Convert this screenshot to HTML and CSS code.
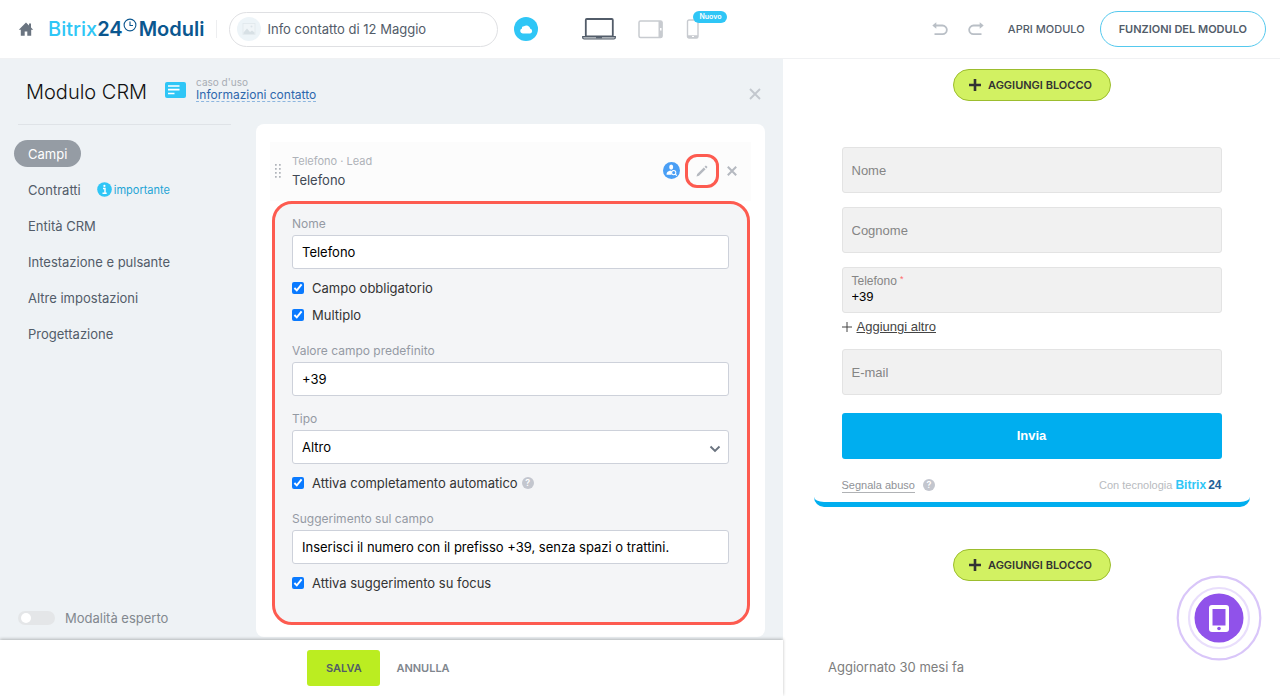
FILE: index.html
```html
<!DOCTYPE html>
<html lang="it">
<head>
<meta charset="utf-8">
<meta name="viewport" content="width=device-width, initial-scale=1">
<title>Bitrix24 Moduli</title>
<link rel="stylesheet" href="styles.css">
</head>
<body>
<div class="app">
  <header class="topbar">
    <a class="home" href="#" aria-label="Home">
      <svg width="16" height="16" viewBox="0 0 16 16"><path d="M8 1.500.8 8.700h2v6.100h3.900v-4.300h2.600v4.300h3.900V8.700h2L13 6.500V2.500h-2v2z" fill="#6a7480"/></svg>
    </a>
    <a class="brand" href="#"><span class="brand-light">Bitrix</span><span>24</span><svg class="brand-clock" width="14" height="14" viewBox="0 0 14 14" fill="none" stroke="#0b578f"><circle cx="7" cy="7" r="5.900" stroke-width="1.100"/><path d="M7 3.500V7.500h3" stroke-width="1.100"/></svg><span class="brand-name">Moduli</span></a>
    <span class="divider"></span>
    <div class="title-pill">
      <span class="thumb"><svg width="14" height="14" viewBox="0 0 14 14"><rect x="1" y="1.500" width="12" height="11" fill="#f0f5f8" stroke="#e0e8ec" stroke-width=".8"/><circle cx="9.500" cy="4.500" r="1" fill="#dbe4e9"/><path d="m1.500 10.500 3.500-4 3 3.500 2-1.500 2.500 2v1.500h-11z" fill="#d7e0e5"/></svg></span>
      <span>Info contatto di 12 Maggio</span>
    </div>
    <button class="icon-btn cloud" aria-label="Salvato">
      <svg width="24" height="24" viewBox="0 0 24 24"><circle cx="12" cy="12" r="12" fill="#2fc6f6"/><path d="M8.700 16.500a2.500 2.500 0 0 1-.7-4.900 2 2 0 0 1 2-2.300 4 4 0 0 1 6.300 2.500 2.400 2.400 0 0 1-.2 4.700z" fill="#fff"/></svg>
    </button>
    <div class="devices">
      <button class="icon-btn" aria-label="Desktop"><svg width="34" height="22" viewBox="0 0 34 22" fill="none" stroke="#525c69"><rect x="3.800" y="1" width="27" height="17.500" rx="1" stroke-width="1.800"/><path d="M.7 18.600h32.600v1.200q0 1.200-1.500 1.200H2.200Q.7 21 .7 19.800z" fill="#c9ccd1" stroke-width="1.200"/><path d="M14 19.700h6" stroke-width="1.200"/></svg></button>
      <button class="icon-btn" aria-label="Tablet"><svg width="26" height="19" viewBox="0 0 26 19"><rect x="1" y="1" width="23" height="16.500" rx="1.500" fill="#fff" stroke="#c8cbd0" stroke-width="1.500"/><path d="M20.500 1H23q1.500 0 1.500 1.500V16q0 1.500-1.500 1.500h-2.500z" fill="#c8cbd0"/><rect x="22" y="8" width="1.500" height="2.500" fill="#fff"/></svg></button>
      <button class="icon-btn phone" aria-label="Telefono"><svg width="14" height="20" viewBox="0 0 14 20"><rect x="1.500" y="1" width="10.500" height="18" rx="1.500" fill="#fff" stroke="#c8cbd0" stroke-width="1.400"/><path d="M1.500 16.200H12v1.600q0 1.200-1.200 1.200H2.700q-1.200 0-1.200-1.200z" fill="#c8cbd0"/><path d="M6 17.500h2" stroke="#fff"/></svg><span class="new-tag">Nuovo</span></button>
    </div>
    <div class="actions">
      <button class="icon-btn" aria-label="Annulla azione"><svg width="16" height="14" viewBox="0 0 16 14"><path d="M3 3.500h7.500a4.300 4.300 0 0 1 0 8.700H2.500" fill="none" stroke="#b9bfc6" stroke-width="1.800"/><path d="M.3 3.500 4.300.2v6.600z" fill="#b9bfc6"/></svg></button>
      <button class="icon-btn" aria-label="Ripeti azione"><svg width="16" height="14" viewBox="0 0 16 14"><path d="M13 3.500H5.500a4.300 4.300 0 0 0 0 8.700h8" fill="none" stroke="#b9bfc6" stroke-width="1.800"/><path d="m15.700 3.500-4-3.300v6.600z" fill="#b9bfc6"/></svg></button>
      <a class="open-form" href="#">APRI MODULO</a>
      <button class="features">FUNZIONI DEL MODULO</button>
    </div>
  </header>

  <main class="workspace">
    <section class="editor">
      <div class="editor-head">
        <h1>Modulo CRM</h1>
        <svg class="case-icon" width="21" height="16" viewBox="0 0 21 16"><rect width="21" height="16" rx="2" fill="#2fc6f6"/><path d="M3 4h11.500M3 7.600h11.500M3 11.500h6.500" stroke="#fff" stroke-width="1.700"/></svg>
        <div class="case"><span>caso d'uso</span><a href="#">Informazioni contatto</a></div>
        <button class="icon-btn close" aria-label="Chiudi"><svg width="12" height="12" viewBox="0 0 12 12"><path d="m1 1 10 10M11 1 1 11" stroke="#c3c8ce" stroke-width="1.900"/></svg></button>
      </div>
      <div class="editor-body">
        <aside class="side">
          <nav class="menu">
            <a class="active" href="#">Campi</a>
            <a href="#">Contratti <span class="important"><svg width="15" height="15" viewBox="0 0 15 15"><circle cx="7.500" cy="7.500" r="7.300" fill="#2fc6f6"/><path d="M6 6.500h2v4.700M5.500 11.200h4.200" stroke="#fff" stroke-width="1.400" fill="none"/><circle cx="7.400" cy="3.900" r="1.100" fill="#fff"/></svg>importante</span></a>
            <a href="#">Entità CRM</a>
            <a href="#">Intestazione e pulsante</a>
            <a href="#">Altre impostazioni</a>
            <a href="#">Progettazione</a>
          </nav>
          <label class="expert"><input type="checkbox"><span>Modalità esperto</span></label>
        </aside>
        <div class="card">
          <div class="field-head">
            <svg class="grip" width="7" height="14" viewBox="0 0 7 14" fill="#b0b4ba"><path d="M0 0h1.700v1.700H0zM4 0h1.700v1.700H4zM0 4h1.700v1.700H0zM4 4h1.700v1.700H4zM0 8h1.700v1.700H0zM4 8h1.700v1.700H4zM0 12h1.700v1.700H0zM4 12h1.700v1.700H4z"/></svg>
            <div class="field-title"><span>Telefono · Lead</span><strong>Telefono</strong></div>
            <svg width="17" height="17" viewBox="0 0 17 17"><circle cx="8.500" cy="8.500" r="8.500" fill="#4a9ff5"/><ellipse cx="8.200" cy="5.100" rx="2" ry="2.600" fill="#fff"/><path d="M3.500 12.800c0-2.800 1-3.600 3.700-4.400l2 1-.8 3.400z" fill="#fff"/><circle cx="10.700" cy="10.600" r="2.100" fill="#4a9ff5" stroke="#fff" stroke-width="1.100"/><path d="m12.300 12.200 1.500 1.500" stroke="#fff" stroke-width="1.200"/></svg>
            <button class="icon-btn edit" aria-label="Modifica"><svg width="12" height="12" viewBox="0 0 12 12"><path d="M.5 11.500 1.200 9 7.800 2.400l1.800 1.800L3 10.800zM8.500 1.700l.8-.8q.6-.6 1.200 0l.6.6q.6.600 0 1.200l-.8.800z" fill="#b5b9c0"/></svg></button>
            <button class="icon-btn" aria-label="Rimuovi"><svg width="10" height="10" viewBox="0 0 10 10"><path d="m.8.8 8.400 8.400M9.200.8.8 9.200" stroke="#b5b9c0" stroke-width="2"/></svg></button>
          </div>
          <form class="settings">
            <div class="group">
              <label class="caption" for="name">Nome</label>
              <input class="box" id="name" type="text" value="Telefono">
              <label class="check"><input type="checkbox" checked>Campo obbligatorio</label>
              <label class="check"><input type="checkbox" checked>Multiplo</label>
            </div>
            <div class="group near">
              <label class="caption" for="default">Valore campo predefinito</label>
              <input class="box" id="default" type="text" value="+39">
            </div>
            <div class="group">
              <label class="caption" for="type">Tipo</label>
              <div class="select-wrap">
                <select class="box" id="type"><option>Altro</option></select>
                <svg class="chevron" width="12" height="8" viewBox="0 0 12 8"><path d="m1.500 1.500 4.500 4.500 4.500-4.500" fill="none" stroke="#6a737f" stroke-width="1.900"/></svg>
              </div>
              <label class="check"><input type="checkbox" checked>Attiva completamento automatico<span class="help">?</span></label>
            </div>
            <div class="group">
              <label class="caption" for="hint">Suggerimento sul campo</label>
              <input class="box" id="hint" type="text" value="Inserisci il numero con il prefisso +39, senza spazi o trattini.">
              <label class="check"><input type="checkbox" checked>Attiva suggerimento su focus</label>
            </div>
          </form>
        </div>
      </div>
      <footer class="savebar">
        <button class="save">SALVA</button>
        <button class="cancel">ANNULLA</button>
      </footer>
    </section>

    <section class="preview">
      <button class="add-block"><svg width="12" height="12" viewBox="0 0 12 12"><path d="M6 0v12M0 6h12" stroke="#333" stroke-width="2.600"/></svg>AGGIUNGI BLOCCO</button>
      <form class="crm-form">
        <input class="crm-input" type="text" placeholder="Nome" aria-label="Nome">
        <input class="crm-input" type="text" placeholder="Cognome" aria-label="Cognome">
        <div class="crm-phone">
          <label for="phone">Telefono <sup>*</sup></label>
          <input id="phone" type="tel" value="+39">
        </div>
        <a class="add-more" href="#"><svg width="10" height="10" viewBox="0 0 10 10"><path d="M5 0v10M0 5h10" stroke="#444"/></svg><span>Aggiungi altro</span></a>
        <input class="crm-input" type="email" placeholder="E-mail" aria-label="E-mail">
        <button class="submit" type="button">Invia</button>
        <div class="crm-foot">
          <a href="#">Segnala abuso</a><span class="help">?</span>
          <span class="powered">Con tecnologia <b>Bitrix</b><b class="dark">24</b></span>
        </div>
      </form>
      <button class="add-block"><svg width="12" height="12" viewBox="0 0 12 12"><path d="M6 0v12M0 6h12" stroke="#333" stroke-width="2.600"/></svg>AGGIUNGI BLOCCO</button>
      <p class="updated">Aggiornato 30 mesi fa</p>
      <button class="icon-btn widget" aria-label="Chiamata">
        <svg width="86" height="86" viewBox="0 0 86 86" fill="none"><circle cx="43" cy="43" r="41.300" stroke="#d9c6f9" stroke-width="2.200"/><circle cx="43" cy="43" r="30" stroke="#e9defc" stroke-width="2.200"/><circle cx="43" cy="43" r="24.500" fill="#9052ea"/><rect x="33" y="30" width="20" height="27" rx="3" fill="#fff"/><path d="M36.500 34h13v16.500h-13z" fill="#9052ea"/><circle cx="43" cy="53.500" r="1.800" fill="#9052ea"/></svg>
      </button>
    </section>
  </main>
</div>
</body>
</html>
```
FILE: styles.css
```css
* { box-sizing: border-box; }
body { margin: 0; font-family: Inter, "Liberation Sans", sans-serif; font-size: 13px; line-height: 16px; color: #525c69; background: #fff; }
button, input, select { font: inherit; color: inherit; margin: 0; }
button { cursor: pointer; }
a { color: inherit; text-decoration: none; }
svg { display: block; flex: none; }
.app { min-height: 100vh; display: flex; flex-direction: column; }
.icon-btn { display: flex; align-items: center; justify-content: center; border: 0; padding: 0; background: none; flex: none; }

.topbar { display: flex; align-items: center; height: 59px; padding: 0 14px 0 18px; border-bottom: 1px solid #f0f1f3; }
.brand { display: flex; align-items: center; margin-left: 14px; font-size: 20px; line-height: 24px; font-weight: 600; color: #0b578f; }
.brand-light { color: #2fc6f6; font-weight: 500; }
.brand-clock { align-self: flex-start; margin-top: 1px; }
.brand-name { margin-left: 2px; }
.divider { width: 1px; height: 18px; margin: 0 12px; background: #edeef0; }
.title-pill { display: flex; align-items: center; gap: 6px; width: 269px; height: 35px; padding: 0 7px; border: 1px solid #dfe0e3; border-radius: 18px; white-space: nowrap; }
.thumb { display: flex; align-items: center; justify-content: center; width: 24px; height: 24px; border-radius: 50%; background: #edf4f8; }
.cloud { margin-left: 16px; }
.devices { display: flex; align-items: center; gap: 22px; margin-left: 44px; }
.phone { position: relative; }
.new-tag { position: absolute; left: 7px; top: -8px; padding: 0 6px; border-radius: 6px; background: #2fc6f6; color: #fff; font-size: 7px; line-height: 12px; font-weight: 600; }
.actions { display: flex; align-items: center; gap: 20px; margin-left: auto; font-size: 11px; }
.open-form { margin-left: 4px; font-weight: 500; }
.features { height: 36px; margin-left: -5px; padding: 0 18px; border: 1px solid #55c9ee; border-radius: 18px; background: #fff; font-weight: 600; white-space: nowrap; }

.workspace { flex: 1; display: grid; grid-template-columns: minmax(0, 783fr) minmax(0, 497fr); }
.editor { display: flex; flex-direction: column; background: #eef2f5; }
.editor-head { display: flex; align-items: center; height: 65px; padding: 0 22px 0 26px; }
.editor-head h1 { margin: 0; font-size: 20px; line-height: 28px; font-weight: 300; color: #111; }
.case-icon { margin: 0 10px 4px 18px; }
.case { display: flex; flex-direction: column; align-items: flex-start; margin-bottom: 6px; }
.case span { font-size: 10px; line-height: 12px; color: #a8adb4; }
.case a { font-size: 12px; line-height: 13px; color: #2d67ad; border-bottom: 1px dashed #8db6df; }
.close { margin: 4px 0 0 auto; }
.editor-body { flex: 1; display: flex; padding-right: 18px; }
.side { display: flex; flex-direction: column; justify-content: space-between; width: 256px; flex: none; padding-bottom: 14px; }
.menu { display: flex; flex-direction: column; align-items: flex-start; gap: 9px; margin: 0 25px 0 18px; padding-top: 15px; border-top: 1px solid #dfe3e7; }
.menu a { display: flex; align-items: center; height: 27px; margin-left: -4px; padding: 0 14px; border-radius: 14px; }
.menu .active { background: #959ca4; color: #fff; }
.important { display: flex; align-items: center; gap: 2px; margin-left: 16px; font-size: 11px; color: #1ea5d6; }
.expert { display: flex; align-items: center; gap: 10px; margin-left: 18px; color: #82888f; }
.expert input { appearance: none; display: flex; align-items: center; width: 37px; height: 14px; border-radius: 7px; background: #e4e6e8; padding-left: 3px; }
.expert input::before { content: ""; width: 10px; height: 10px; border-radius: 50%; background: #fff; }

.card { flex: 1; min-width: 0; margin-bottom: 3px; padding: 18px 14px 12px; border-radius: 8px; background: #fff; }
.field-head { display: flex; align-items: center; height: 59px; padding: 0 14px 2px 5px; background: #fcfcfc; }
.grip { margin-right: 10px; }
.field-title { display: flex; flex-direction: column; gap: 3px; flex: 1; }
.field-title span { font-size: 11px; color: #aeb2b8; }
.field-title strong { font-weight: 400; color: #414955; }
.edit { width: 34px; height: 34px; margin: 0 8px 0 5px; border: 3px solid #fd5b50; border-radius: 12px; }
.settings { display: flex; flex-direction: column; gap: 20px; margin: 0 1px 0 2px; padding: 12px 18px 31px 17px; border: 3px solid #fd5b50; border-radius: 20px; background: #f4f5f7; }
.group { display: flex; flex-direction: column; }
.near { margin-bottom: -5px; }
.caption { margin-bottom: 3px; font-size: 12px; color: #949aa4; }
.box { width: 100%; height: 34px; padding: 0 9px; border: 1px solid #cdd1da; border-radius: 3px; background: #fff; color: #000; font-size: 13px; }
.check { display: flex; align-items: center; margin-top: 11px; color: #333; }
.check input { width: 12px; height: 12px; margin-right: 8px; accent-color: #0a7aff; }
.select-wrap { position: relative; }
.select-wrap select { appearance: none; display: block; }
.chevron { position: absolute; right: 8px; top: 15px; pointer-events: none; }
.help { display: flex; align-items: center; justify-content: center; width: 12px; height: 12px; margin-left: 4px; border-radius: 50%; background: #c3c6ce; color: #fff; font-size: 9px; line-height: 12px; font-weight: 600; }

.savebar { position: relative; z-index: 1; display: flex; align-items: center; justify-content: center; gap: 16px; height: 56px; padding-right: 26px; background: #fff; box-shadow: 0 -1px 3px rgba(0, 0, 0, .25); font-size: 11px; font-weight: 600; }
.save { width: 73px; height: 36px; padding: 0; border: 0; border-radius: 3px; background: #bbed21; color: #525c69; }
.cancel { padding: 0; border: 0; background: none; color: #80868e; }

.preview { position: relative; display: flex; flex-direction: column; align-items: center; padding-top: 10px; background: #fff; }
.add-block { display: flex; align-items: center; justify-content: center; gap: 7px; width: 158px; height: 32px; padding: 0 2px 0 0; border: 1px solid #9cbd2e; border-radius: 16px; background: #d2f162; color: #333; font-size: 11px; font-weight: 600; white-space: nowrap; }
.crm-form { display: flex; flex-direction: column; width: calc(100% - 61px); margin: 30px 0 42px; padding: 16px 28px 8px; border-bottom: 5px solid #00aeef; border-radius: 10px; font-family: "Liberation Sans", Arial, sans-serif; }
.crm-input, .crm-phone { width: 100%; height: 46px; margin-bottom: 14px; padding: 0 9px; border: 1px solid #e3e3e3; border-radius: 3px; background: #f1f1f1; }
.crm-input::placeholder { color: #858585; opacity: 1; }
.crm-phone { display: flex; flex-direction: column; margin-bottom: 6px; padding-top: 6px; }
.crm-phone label { display: flex; gap: 3px; font-size: 12px; line-height: 15px; color: #858585; }
.crm-phone sup { font-size: 9px; line-height: 10px; color: #ff6a6a; }
.crm-phone input { padding: 0; border: 0; background: none; color: #000; line-height: 16px; }
.add-more { display: flex; align-items: center; gap: 5px; margin-bottom: 14px; color: #444; }
.add-more span { text-decoration: underline; }
.submit { height: 46px; margin: 4px 0 17px; border: 0; border-radius: 3px; background: #00aeef; color: #fff; font-weight: 700; }
.crm-foot { display: flex; align-items: center; font-size: 11px; line-height: 18px; color: #8f9297; }
.crm-foot a { line-height: 14px; border-bottom: 1px solid #b0b2b5; }
.crm-foot .help { margin-left: 8px; font-size: 9px; font-family: Inter, sans-serif; }
.powered { margin-left: auto; color: #b8bbc0; }
.powered b { font-size: 12px; color: #2fc6f6; }
.powered .dark { margin-left: 2px; color: #215f98; }
.updated { align-self: flex-start; margin: 78px 0 0 45px; color: #7d7d7d; }
.widget { position: absolute; right: 18px; bottom: 35px; }
```
